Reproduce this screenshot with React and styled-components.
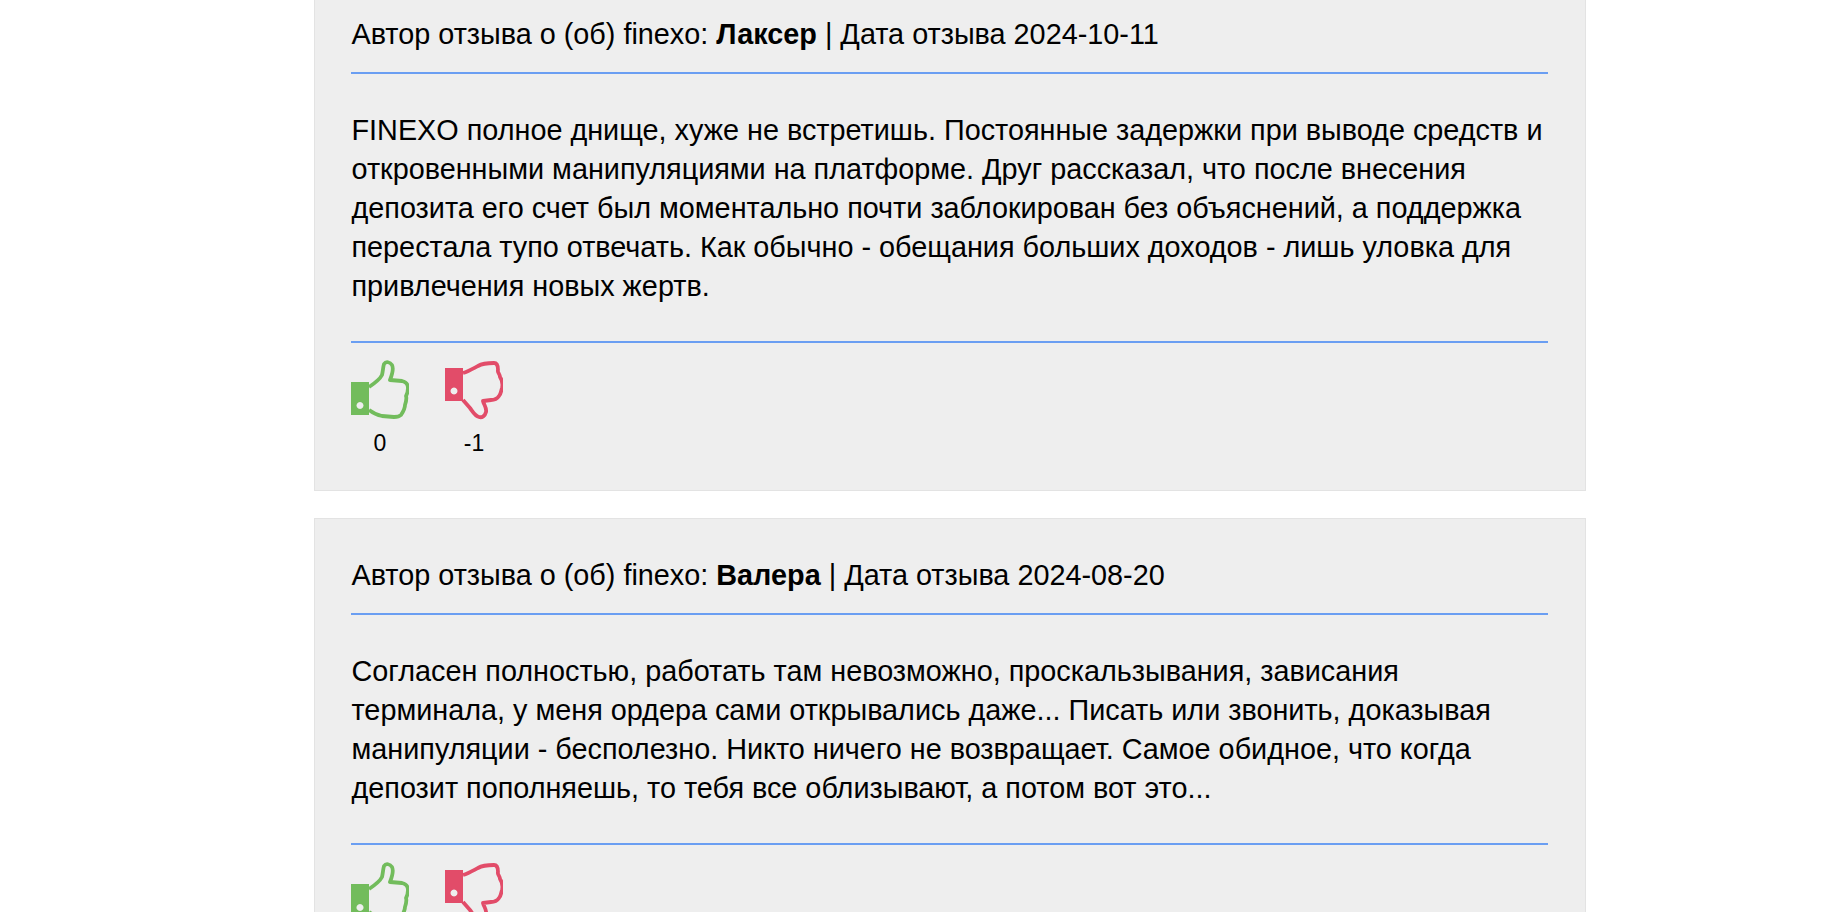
import React from "react"
import styled, { createGlobalStyle } from "styled-components"

const GlobalStyle = createGlobalStyle`
  html, body {
    margin: 0;
    padding: 0;
    height: 912px;
    overflow: hidden;
    background: #fff;
    color: #000;
    font-family: "Liberation Sans", Arial, sans-serif;
  }
`

// page is scrolled in the reference, first card starts above the fold
const Page = styled.div`
  width: 1272px;
  margin: -23px 0 0 314px;
  display: flex;
  flex-direction: column;
  gap: 27px;
`

const Card = styled.article`
  box-sizing: border-box;
  background: #eee;
  border: 1px solid #e3e3e3;
  padding: 0 37px 0 36px;
`

const Author = styled.div`
  height: 96px;
  box-sizing: border-box;
  padding: 37px 0 0 0.5px;
  font-size: 28.8px;
  line-height: 39px;
  border-bottom: 2px solid #6a9ef2;
`

const Body = styled.p`
  margin: 0;
  padding: 36.5px 0 35.5px 0.5px;
  font-size: 28.8px;
  line-height: 39px;
  border-bottom: 2px solid #6a9ef2;
`

const Votes = styled.div`
  display: flex;
  gap: 36px;
  padding: 17px 0 34px;
`

const Vote = styled.div`
  width: 58px;
  display: flex;
  flex-direction: column;
  align-items: center;
`

const Icon = styled.svg`
  display: block;
  width: 58px;
  height: 60px;
`

const Count = styled.span`
  margin-top: 10px;
  font-size: 23px;
  line-height: 26px;
`

const ThumbUp = () => (
  <Icon viewBox="0 0 58 60">
    <path
      d="M18 27 C24 23 29 19 31 15 C32 11 32 7 33 4 C35 1 39 2 41 5 C43 9 41 15 39 20 L51 21 C55 22 57 25 57 28 C57 32 56 34 55 36 C56 39 55 42 54 45 C54 49 52 52 50 55 C48 57 46 57 43 57 L31 56 C26 55 22 53 18 50"
      fill="none"
      stroke="#72bc5c"
      strokeWidth="3.8"
      strokeLinejoin="round"
    />
    <path
      fillRule="evenodd"
      d="M0 22 H18 V55 H0 Z M9 42 a3.5 3.5 0 1 0 0.01 0 Z"
      fill="#72bc5c"
    />
  </Icon>
)

const ThumbDown = () => (
  <Icon viewBox="0 0 58 60">
    <path
      d="M18 13 C24 11 29 8 33 6 C38 3 44 3 49 3 C52 3 53 6 53 10 C52 12 55 14 55 17 C57 20 58 24 57 28 C56 31 56 34 54 36 C52 39 49 40 46 40 L38 41 C39 45 42 48 41 52 C40 56 37 58 34 57 C30 56 28 52 25 48 L18 40"
      fill="none"
      stroke="#e24c69"
      strokeWidth="3.8"
      strokeLinejoin="round"
    />
    <path
      fillRule="evenodd"
      d="M0 8 H18 V41 H0 Z M9 27.5 a3.5 3.5 0 1 0 0.01 0 Z"
      fill="#e24c69"
    />
  </Icon>
)

const reviews = [
  {
    author: "Лаксер",
    date: "2024-10-11",
    text: "FINEXO полное днище, хуже не встретишь. Постоянные задержки при выводе средств и откровенными манипуляциями на платформе. Друг рассказал, что после внесения депозита его счет был моментально почти заблокирован без объяснений, а поддержка перестала тупо отвечать. Как обычно - обещания больших доходов - лишь уловка для привлечения новых жертв.",
    up: 0,
    down: -1,
  },
  {
    author: "Валера",
    date: "2024-08-20",
    text: "Согласен полностью, работать там невозможно, проскальзывания, зависания терминала, у меня ордера сами открывались даже... Писать или звонить, доказывая манипуляции - бесполезно. Никто ничего не возвращает. Самое обидное, что когда депозит пополняешь, то тебя все облизывают, а потом вот это...",
    up: 0,
    down: -1,
  },
]

const App = () => (
  <>
    <GlobalStyle />
    <Page>
      {reviews.map(review => (
        <Card key={review.date}>
          <Author>
            Автор отзыва о (об) finexo: <b>{review.author}</b> | Дата отзыва {review.date}
          </Author>
          <Body>{review.text}</Body>
          <Votes>
            <Vote>
              <ThumbUp />
              <Count>{review.up}</Count>
            </Vote>
            <Vote>
              <ThumbDown />
              <Count>{review.down}</Count>
            </Vote>
          </Votes>
        </Card>
      ))}
    </Page>
  </>
)

export default App
